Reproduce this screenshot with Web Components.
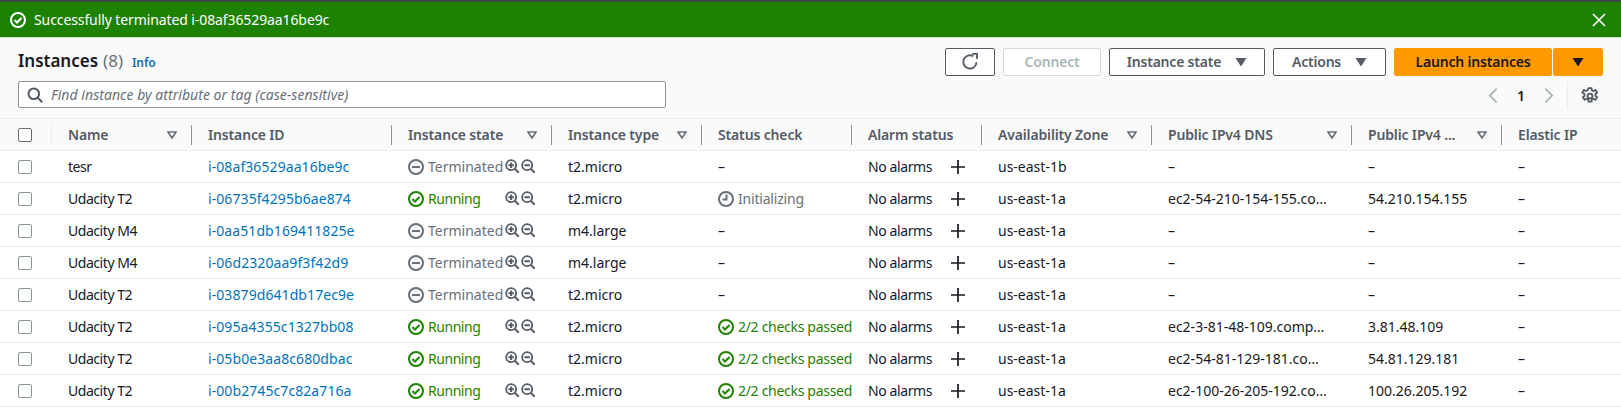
<!DOCTYPE html>
<html>
<head>
<meta charset="utf-8">
<title>Instances</title>
<style>
html, body { margin:0; background:#fff; }
body { font:14px/20px "Noto Sans", sans-serif; color:#16191f; --cols:52px 140px 200px 160px 150px 150px 130px 170px 200px 150px 119px; }
</style>
</head>
<body>
<aws-flash>Successfully terminated i-08af36529aa16be9c</aws-flash>
<ec2-toolbar count="8">
    <aws-button slot=actions icon=refresh></aws-button>
    <aws-button slot=actions disabled style="--w:98px">Connect</aws-button>
    <aws-button slot=actions caret style="--w:156px">Instance state</aws-button>
    <aws-button slot=actions caret style="--w:113px">Actions</aws-button>
    <aws-button slot=actions primary style="--w:158px">Launch instances</aws-button>
    <aws-button slot=actions primary caret style="--w:50px;margin-left:-7px"></aws-button>
</ec2-toolbar>
<ec2-table>
    <ec2-head></ec2-head>
    <ec2-row name="tesr" iid="i-08af36529aa16be9c" state="Terminated" type="t2.micro" check="–" az="us-east-1b" dns="–" ip="–"></ec2-row>
    <ec2-row name="Udacity T2" iid="i-06735f4295b6ae874" state="Running" type="t2.micro" check="Initializing" az="us-east-1a" dns="ec2-54-210-154-155.co…" ip="54.210.154.155"></ec2-row>
    <ec2-row name="Udacity M4" iid="i-0aa51db169411825e" state="Terminated" type="m4.large" check="–" az="us-east-1a" dns="–" ip="–"></ec2-row>
    <ec2-row name="Udacity M4" iid="i-06d2320aa9f3f42d9" state="Terminated" type="m4.large" check="–" az="us-east-1a" dns="–" ip="–"></ec2-row>
    <ec2-row name="Udacity T2" iid="i-03879d641db17ec9e" state="Terminated" type="t2.micro" check="–" az="us-east-1a" dns="–" ip="–"></ec2-row>
    <ec2-row name="Udacity T2" iid="i-095a4355c1327bb08" state="Running" type="t2.micro" check="2/2 checks passed" az="us-east-1a" dns="ec2-3-81-48-109.comp…" ip="3.81.48.109"></ec2-row>
    <ec2-row name="Udacity T2" iid="i-05b0e3aa8c680dbac" state="Running" type="t2.micro" check="2/2 checks passed" az="us-east-1a" dns="ec2-54-81-129-181.co…" ip="54.81.129.181"></ec2-row>
    <ec2-row name="Udacity T2" iid="i-00b2745c7c82a716a" state="Running" type="t2.micro" check="2/2 checks passed" az="us-east-1a" dns="ec2-100-26-205-192.co…" ip="100.26.205.192"></ec2-row>
</ec2-table>

<script>
const svg = (body, size=16) => `<svg width="${size}" height="${size}" viewBox="0 0 16 16" fill="none" stroke="currentColor" stroke-width="2" style="display:block;flex:none">${body}</svg>`;
const icons = {
    ok:      svg('<circle cx="8" cy="8" r="7"/><path d="M4.5 8l2.500 2.500 4.500-4.500"/>'),
    minus:   svg('<circle cx="8" cy="8" r="7"/><path d="M4 8h8"/>'),
    clock:   svg('<circle cx="8" cy="8" r="7"/><path d="M8.500 3.500v5H4.500"/>'),
    zoomIn:  svg('<circle cx="6.800" cy="6.800" r="5.500"/><path d="M10.800 10.800l4.400 4.400M3.800 6.800h6M6.800 3.800v6" stroke-width="2.200"/>', 14.500),
    zoomOut: svg('<circle cx="6.800" cy="6.800" r="5.500"/><path d="M10.800 10.800l4.400 4.400M3.800 6.800h6" stroke-width="2.200"/>', 14.500),
    plus:    svg('<path d="M1 8h14M8 1v14" stroke-width="1.700"/>'),
    search:  svg('<circle cx="6.800" cy="6.800" r="5.300"/><path d="M10.800 10.800l4.400 4.400"/>'),
    close:   svg('<path d="M2 2l12 12M14 2L2 14" stroke-width="1.600"/>'),
    refresh: svg('<path d="M13.800 8.200A5.900 5.900 0 1 1 11 2.900" stroke-width="1.700"/><path d="M10 .8h4.200V5" stroke-width="1.700"/>', 18),
    prev:    svg('<path d="M11 1.500L4.500 8l6.500 6.500" stroke-width="1.700"/>', 17),
    next:    svg('<path d="M5 1.500L11.500 8 5 14.500" stroke-width="1.700"/>', 17),
    gear:    svg('<circle cx="8" cy="8" r="2.200" stroke-width="1.600"/><path stroke-width="1.600" d="M6.700 1h2.600l.4 1.900 1.500.7 1.700-1 1.400 2.300-1.400 1.300v1.600l1.400 1.300-1.400 2.300-1.700-1-1.500.7-.4 1.900H6.700l-.4-1.900-1.500-.7-1.700 1-1.400-2.300 1.400-1.300V6.200L1.200 4.900l1.400-2.300 1.700 1 1.500-.7z"/>', 18),
};
const sortCaret = `<svg width="10" height="8" viewBox="0 0 10 8" style="display:block;flex:none"><path d="M1 1h8L5 7z" fill="none" stroke="#687078" stroke-width="1.600"/></svg>`;
const solidCaret = `<svg width="12" height="10" viewBox="0 0 12 10" style="display:block;flex:none"><path d="M0.500 1h11L6 9.500z" fill="currentColor"/></svg>`;

class AwsFlash extends HTMLElement {
    constructor() {
        super();
        this.attachShadow({mode:'open'}).innerHTML = `
        <style>
        :host { display:flex; align-items:center; gap:8px; height:35px; padding:0 14px 0 10px; background:#1d8102; color:#fff; border-top:2px solid #414750; }
        .msg { flex:1; letter-spacing:-.1px; }
        </style>
        ${icons.ok}
        <span class=msg><slot></slot></span>
        ${icons.close}`;
    }
}
customElements.define('aws-flash', AwsFlash);

class AwsButton extends HTMLElement {
    constructor() {
        super();
        const icon = this.getAttribute('icon');
        const caret = this.hasAttribute('caret');
        this.attachShadow({mode:'open'}).innerHTML = `
        <style>
        :host { display:flex; align-items:center; justify-content:center; gap:14px; box-sizing:border-box; width:var(--w,50px); height:28px;
            border:1px solid #545b64; border-radius:2px; background:#fff; color:#545b64; font-weight:600; font-size:14px; letter-spacing:-.2px; }
        :host([disabled]) { border-color:#d5dbdb; color:#aab7b8; }
        :host([primary]) { background:#f90; border-color:#f90; color:#16191f; }
        </style>
        ${icon ? icons[icon] : ''}
        <slot></slot>
        ${caret ? solidCaret : ''}`;
    }
}
customElements.define('aws-button', AwsButton);

class Ec2Toolbar extends HTMLElement {
    constructor() {
        super();
        this.attachShadow({mode:'open'}).innerHTML = `
        <style>
        :host { display:flex; justify-content:space-between; box-sizing:border-box; height:82px; padding:10px 18px 0; background:#fafafa; border-top:1px solid #d5dbdb; border-bottom:1px solid #eaeded; }
        .left { display:flex; flex-direction:column; gap:6px; width:648px; }
        .title { display:flex; align-items:baseline; height:28px; line-height:28px; font-size:17px; font-weight:600; margin-top:-1px; }
        .count { font-weight:400; color:#687078; margin-left:5px; }
        .info { font-size:12px; color:#0073bb; margin-left:9px; letter-spacing:-.1px; }
        .search { display:flex; align-items:center; gap:8px; box-sizing:border-box; height:27px; padding:0 8px; background:#fff; border:1px solid #879596; border-radius:2px; color:#687078; font-style:italic; letter-spacing:.04px; }
        .search svg { color:#545b64; }
        .right { display:flex; flex-direction:column; align-items:flex-end; gap:6px; }
        .actions { display:flex; gap:8px; }
        .pager { display:flex; align-items:center; height:27px; margin-right:4px; color:#16191f; }
        .pager .chev { color:#aab7b8; }
        .pager .num { width:38px; text-align:center; font-weight:600; }
        .pager .gear { color:#545b64; margin-left:10px; padding-left:13px; height:27px; display:flex; align-items:center; border-left:1px solid #eaeded; }
        </style>
        <div class=left>
            <div class=title>Instances <span class=count>(${this.getAttribute('count')})</span><span class=info>Info</span></div>
            <div class=search>${icons.search}<span>Find instance by attribute or tag (case-sensitive)</span></div>
        </div>
        <div class=right>
            <div class=actions><slot name=actions></slot></div>
            <div class=pager>
                <span class=chev>${icons.prev}</span><span class=num>1</span><span class=chev>${icons.next}</span>
                <span class=gear>${icons.gear}</span>
            </div>
        </div>`;
    }
}
customElements.define('ec2-toolbar', Ec2Toolbar);

class Ec2Table extends HTMLElement {
    constructor() {
        super();
        this.attachShadow({mode:'open'}).innerHTML = `<style>:host { display:block; }</style><slot></slot>`;
    }
}
customElements.define('ec2-table', Ec2Table);

const checkbox = `<span class=box></span>`;
const boxCss = `.box { display:block; box-sizing:border-box; width:14px; height:14px; margin-left:18px; border:1px solid #687078; border-radius:2px; background:#fff; }`;

class Ec2Head extends HTMLElement {
    constructor() {
        super();
        const cols = [['Name',1],['Instance ID',0],['Instance state',1],['Instance type',1],['Status check',0],['Alarm status',0],['Availability Zone',1],['Public IPv4 DNS',1],['Public IPv4 ...',1],['Elastic IP',0]];
        this.attachShadow({mode:'open'}).innerHTML = `
        <style>
        :host { display:grid; grid-template-columns:var(--cols); height:31px; align-items:center; background:#fafafa; border-bottom:1px solid #eaeded; color:#545b64; font-weight:600; letter-spacing:-.15px; }
        ${boxCss}
        .sel { display:flex; align-items:center; height:20px; border-right:1px solid #eaeded; box-sizing:border-box; }
        .c { display:flex; align-items:center; justify-content:space-between; height:20px; padding:0 14px 0 16px; border-right:1px solid #879596; }
        .c:last-child { border-right:0; }
        </style>
        <div class=sel>${checkbox}</div>
        ${cols.map(([t,s])=>`<div class=c><span>${t}</span>${s?sortCaret:''}</div>`).join('')}`;
    }
}
customElements.define('ec2-head', Ec2Head);

class Ec2Row extends HTMLElement {
    constructor() {
        super();
        const a = n => this.getAttribute(n);
        const state = a('state') === 'Running'
            ? `<span class="st run">${icons.ok}<span>Running</span></span>`
            : `<span class="st term">${icons.minus}<span>Terminated</span></span>`;
        const check = a('check');
        const status = check === 'Initializing'
            ? `<span class="st term">${icons.clock}<span class=tight>Initializing</span></span>`
            : check === '–' ? '–' : `<span class="st run">${icons.ok}<span class=tight2>${check}</span></span>`;
        this.attachShadow({mode:'open'}).innerHTML = `
        <style>
        :host { display:grid; grid-template-columns:var(--cols); height:31px; align-items:center; border-bottom:1px solid #eaeded; background:#fff; }
        ${boxCss}
        .box { border-color:#879596; }
        .c { padding-left:16px; white-space:nowrap; overflow:hidden; display:flex; align-items:center; }
        .name { letter-spacing:-.45px; }
        a { color:#0073bb; text-decoration:none; letter-spacing:.08px; }
        .st { display:flex; align-items:center; gap:4px; }
        .run { color:#1d8102; letter-spacing:-.45px; }
        .term { color:#687078; }
        .tight { letter-spacing:-.2px; }
        .tight2 { letter-spacing:-.3px; }
        .state .st { width:97px; }
        .tools { display:flex; gap:1px; color:#545b64; }
        .alarm span { width:82px; letter-spacing:-.4px; flex:none; }
        .alarm svg { color:#16191f; }
        </style>
        <div>${checkbox}</div>
        <div class="c name">${a('name')}</div>
        <div class=c><a href="#">${a('iid')}</a></div>
        <div class="c state">${state}<span class=tools>${icons.zoomIn}${icons.zoomOut}</span></div>
        <div class=c>${a('type')}</div>
        <div class=c>${status}</div>
        <div class="c alarm"><span>No alarms</span>${icons.plus}</div>
        <div class=c>${a('az')}</div>
        <div class=c>${a('dns')}</div>
        <div class=c>${a('ip')}</div>
        <div class=c>–</div>`;
    }
}
customElements.define('ec2-row', Ec2Row);
</script>
</body>
</html>
